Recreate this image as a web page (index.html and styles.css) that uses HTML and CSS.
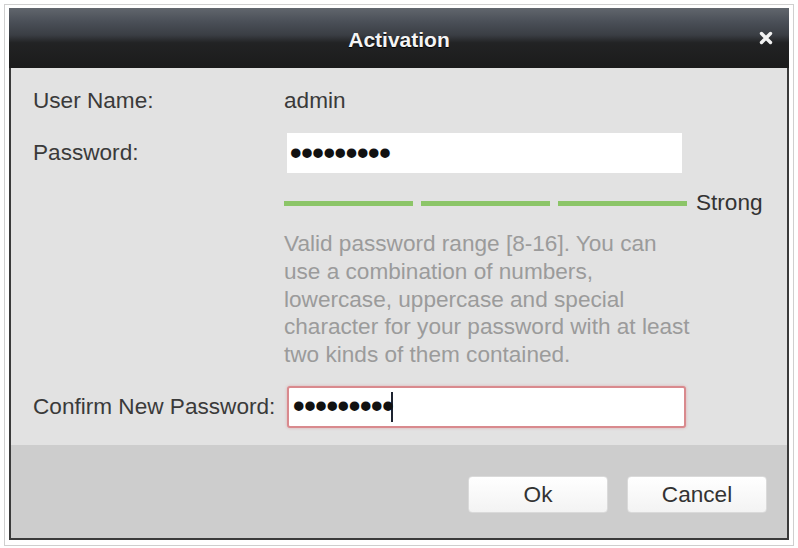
FILE: index.html
```html
<!DOCTYPE html>
<html lang="en">
<head>
<meta charset="utf-8">
<title>Activation</title>
<link rel="stylesheet" href="styles.css">
</head>
<body>
<div class="frame">
  <div class="dialog">
    <div class="titlebar">
      <span></span>
      <span class="title">Activation</span>
      <span class="close" aria-label="Close">
        <svg width="14" height="14" viewBox="0 0 14 14"><path d="M2.5 2.5 L11.5 11.5 M11.5 2.5 L2.5 11.5" stroke="#f2f2f2" stroke-width="3.4" stroke-linecap="round"/></svg>
      </span>
    </div>
    <div class="content">
      <div class="row row-user">
        <span class="label">User Name:</span>
        <span class="value">admin</span>
      </div>
      <div class="row row-pass">
        <span class="label">Password:</span>
        <div class="field"><span class="dots">•••••••••</span></div>
      </div>
      <div class="row row-strength">
        <span class="label"></span>
        <div class="meter">
          <span class="bar"></span>
          <span class="bar"></span>
          <span class="bar"></span>
        </div>
        <span class="strength">Strong</span>
      </div>
      <div class="row row-help">
        <span class="label"></span>
        <p class="help">Valid password range [8-16]. You can<br>use a combination of numbers,<br>lowercase, uppercase and special<br>character for your password with at least<br>two kinds of them contained.</p>
      </div>
      <div class="row row-confirm">
        <span class="label">Confirm New Password:</span>
        <div class="field field-active"><span class="dots">•••••••••</span><span class="caret"></span></div>
      </div>
    </div>
    <div class="footer">
      <button class="btn">Ok</button>
      <button class="btn">Cancel</button>
    </div>
  </div>
</div>
</body>
</html>
```

FILE: styles.css
```css
* { box-sizing: border-box; }

html, body {
  margin: 0;
  padding: 0;
  background: #ffffff;
}

body {
  font-family: "Liberation Sans", Arial, sans-serif;
  font-size: 22.6px;
  color: #3a3a3a;
}

.frame {
  margin: 4px 0 0 4px;
  width: 790px;
  height: 542px;
  border: 1px solid #cfcfcf;
  padding: 3px 4px 5px 4px;
}

.dialog {
  width: 780px;
  height: 532px;
  display: flex;
  flex-direction: column;
  border-left: 2px solid #3a3a3a;
  border-right: 2px solid #3a3a3a;
  border-bottom: 2px solid #3a3a3a;
  background: #e2e2e2;
}

.titlebar {
  height: 60px;
  flex: none;
  display: grid;
  grid-template-columns: 1fr auto 1fr;
  align-items: center;
  background: linear-gradient(#61666d 0%, #4b5058 22%, #3a3e44 45%, #222324 58%, #1b1b1b 100%);
  margin: 0 -2px;
}

.title {
  color: #f4f4f4;
  font-weight: bold;
  font-size: 21px;
  padding-top: 3px;
  text-shadow: 0 1px 1px #000;
}

.close {
  justify-self: end;
  margin-right: 16px;
  width: 14px;
  height: 14px;
  display: flex;
}

.content {
  flex: 1;
  padding: 13px 0 0 22px;
  background: #e2e2e2;
}

.row {
  display: flex;
  align-items: center;
}

.label {
  width: 251px;
  flex: none;
  white-space: nowrap;
}

.row-user { height: 40px; }

.row-pass { height: 40px; margin-top: 12px; }

.field {
  margin-left: 3px;
  width: 395px;
  height: 40px;
  background: #ffffff;
  display: flex;
  align-items: center;
  padding-left: 3px;
}

.dots {
  font-size: 33px;
  font-weight: bold;
  color: #111;
  line-height: 1;
  letter-spacing: -0.4px;
  position: relative;
  top: -1px;
}

.row-strength { height: 26px; margin-top: 17px; }

.meter {
  width: 403px;
  display: flex;
  gap: 8px;
}

.bar {
  flex: 1;
  height: 5px;
  background: #8cc568;
}

.strength {
  margin-left: 9px;
  color: #333;
}

.row-help { margin-top: 14px; align-items: flex-start; }

.help {
  margin: 0;
  color: #9b9b9b;
  line-height: 27.8px;
  white-space: nowrap;
}

.row-confirm { height: 42px; margin-top: 17px; }

.field-active {
  width: 399px;
  height: 42px;
  border: 2px solid #d98a8e;
  border-radius: 3px;
  box-shadow: 0 0 3px rgba(220, 110, 115, 0.45);
  padding-left: 4px;
}

.caret {
  width: 2px;
  height: 30px;
  background: #1d2330;
  margin-left: -2px;
}

.footer {
  height: 93px;
  flex: none;
  background: #cdcdcd;
  display: flex;
  justify-content: flex-end;
  align-items: flex-start;
  gap: 19px;
  padding: 31px 20px 0 0;
}

.btn {
  width: 140px;
  height: 37px;
  font-family: "Liberation Sans", Arial, sans-serif;
  font-size: 22.6px;
  color: #333;
  background: linear-gradient(#ffffff, #f3f3f3);
  border: 1px solid #dadada;
  border-radius: 4px;
  padding: 0;
}
```
